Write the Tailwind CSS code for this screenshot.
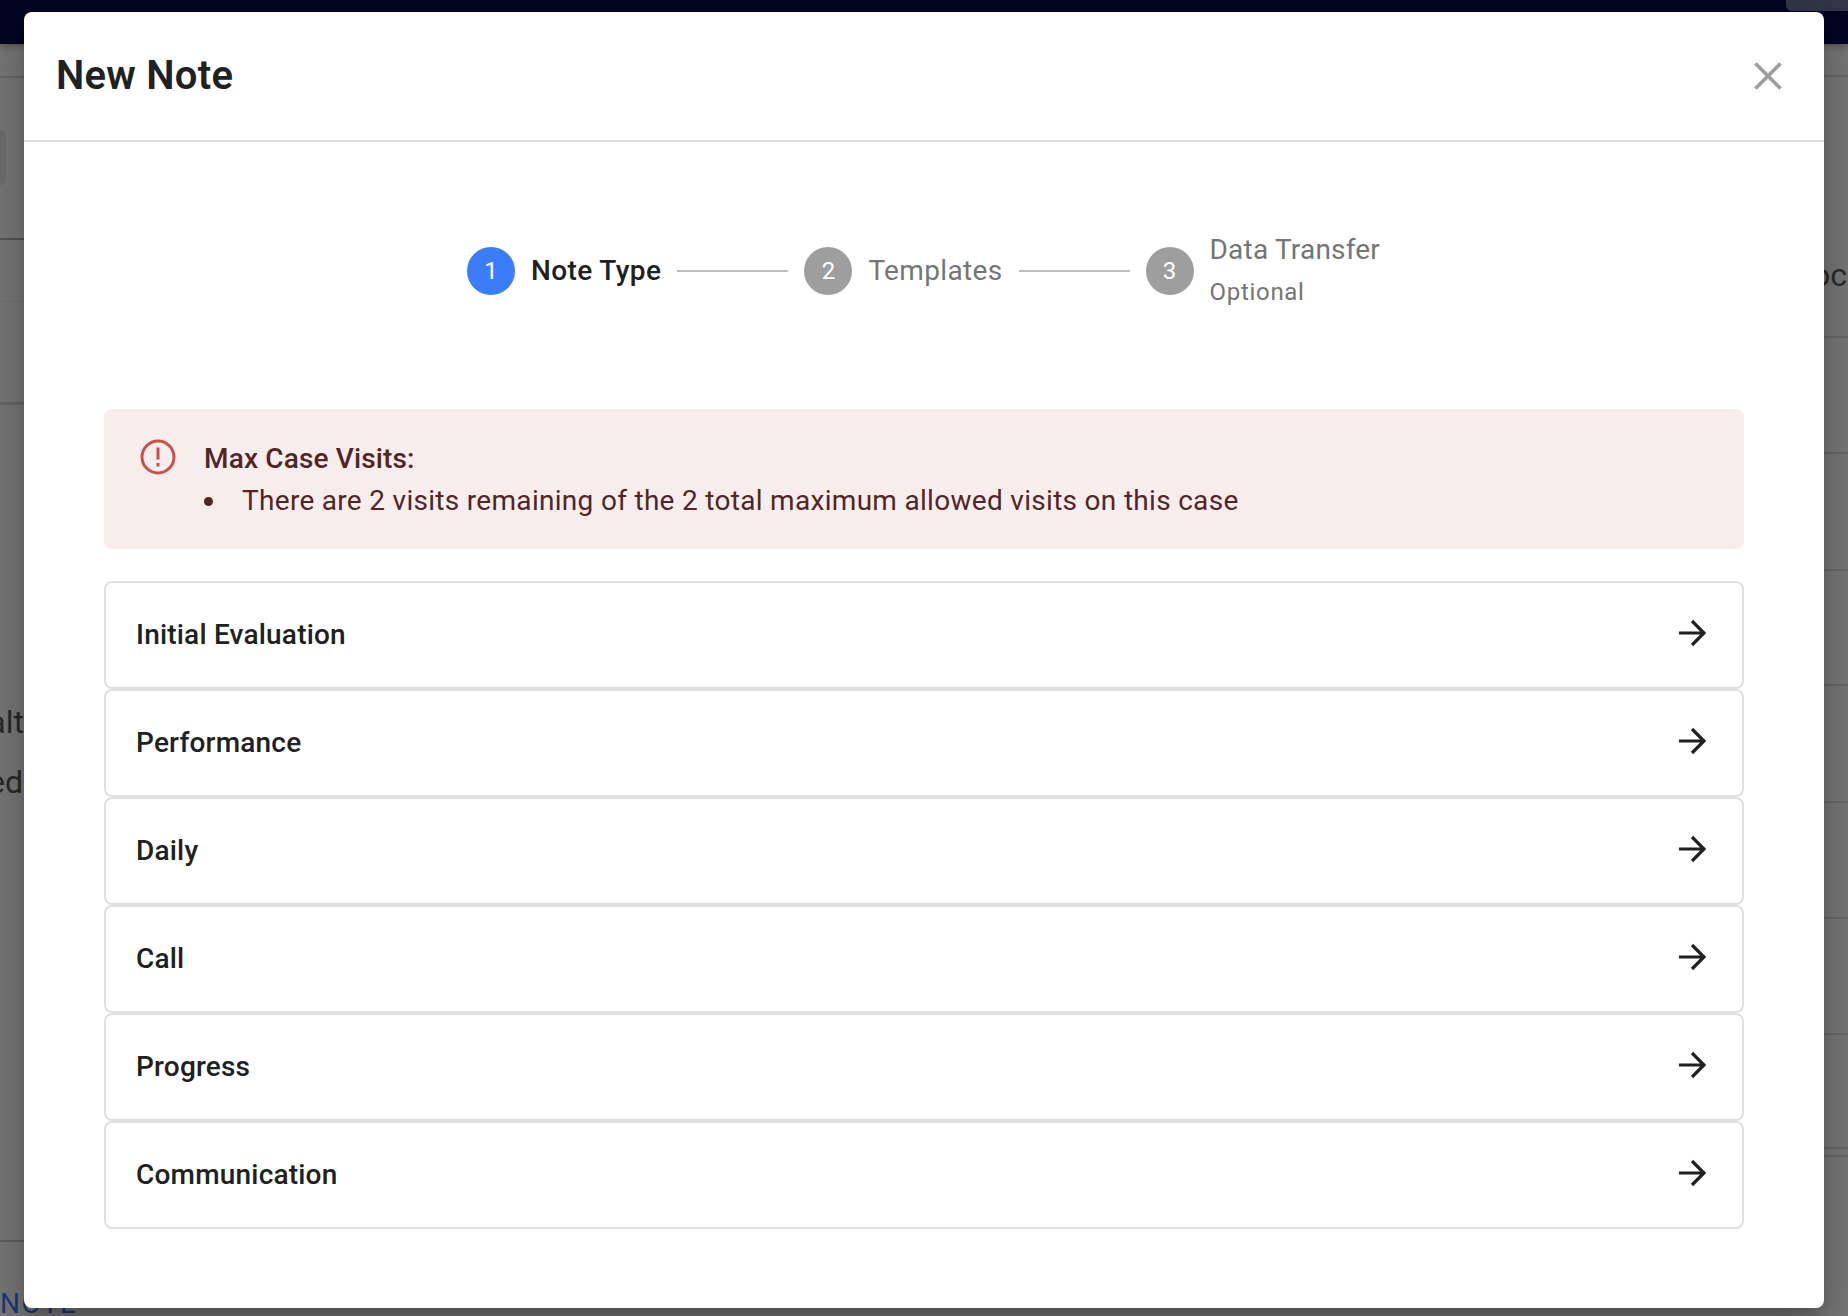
<!DOCTYPE html>
<html lang="en">
<head>
    <meta charset="UTF-8">
    <title>New Note</title>
    <script src="https://cdn.jsdelivr.net/npm/@tailwindcss/browser@4"></script>
</head>
<body class="relative flex h-[1316px] w-[1848px] flex-col overflow-hidden bg-[#787878] font-['Roboto',sans-serif]">

<!-- page behind the dialog -->
<div class="relative z-10 flex h-[44px] shrink-0 justify-end bg-[#030522] shadow-[0_2px_8px_rgba(0,0,0,0.35)]">
    <div class="h-[11px] w-[62px] rounded-bl-[6px] bg-[#33354a]"></div>
</div>
<div class="flex flex-1 justify-between text-[32px] leading-[46px] text-[#2a2a2a]">
    <div class="flex w-[24px] flex-col overflow-hidden">
        <div class="h-[34px] shrink-0 border-b-2 border-[#686868]"></div>
        <div class="h-[162px] shrink-0 border-b-2 border-[#555555] pt-[52px]"><div class="h-[55px] w-[6px] rounded-r-[8px] bg-[#6e6e6e]"></div></div>
        <div class="h-[62px] shrink-0 border-b border-[#727272]"></div>
        <div class="h-[103px] shrink-0 border-b-[3px] border-[#686868]"></div>
        <div class="mt-[294px] flex h-[46px] shrink-0 justify-end">alt</div>
        <div class="mt-[14px] flex h-[46px] shrink-0 justify-end pr-[1px]">ed</div>
        <div class="h-[437px] shrink-0 border-b-2 border-[#606060]"></div>
    </div>
    <div class="flex w-[24px] flex-col overflow-hidden">
        <div class="h-[33px] shrink-0 border-b-2 border-[#686868]"></div>
        <div class="flex h-[261px] shrink-0 justify-end border-b-2 border-[#686868] pr-[1px] pt-[175px]">oc</div>
        <div class="h-[116px] shrink-0 border-b-2 border-[#686868]"></div>
        <div class="h-[117px] shrink-0 border-b-2 border-[#686868]"></div>
        <div class="h-[115px] shrink-0 border-b-2 border-[#686868]"></div>
        <div class="h-[117px] shrink-0 border-b-2 border-[#686868]"></div>
        <div class="h-[116px] shrink-0 border-b-2 border-[#686868]"></div>
        <div class="h-[116px] shrink-0 border-b-2 border-[#686868]"></div>
        <div class="h-[114px] shrink-0 border-b-2 border-[#686868]"></div>
        <div class="h-[8px] shrink-0 border-b-2 border-[#686868]"></div>
    </div>
</div>
<div class="absolute left-0 top-[1286px] text-[28px] leading-[36px] tracking-[1.5px] text-[#1c3a78]">NOTE</div>

<!-- dialog -->
<div class="absolute left-[24px] top-[12px] z-20 flex h-[1296px] w-[1800px] flex-col rounded-[8px] bg-white shadow-[0_11px_15px_-7px_rgba(0,0,0,0.2),0_24px_38px_3px_rgba(0,0,0,0.14),0_9px_46px_8px_rgba(0,0,0,0.12)]">
    <div class="flex h-[130px] shrink-0 items-center justify-between border-b-2 border-[#e0e0e0] pl-[32px] pr-[42px]">
        <h1 class="text-[40px] font-semibold tracking-[0.25px] text-[#212121]">New Note</h1>
        <svg class="h-[28px] w-[28px]" viewBox="0 0 28 28" fill="none" stroke="#9e9e9e" stroke-width="3.6"><path d="M1.500 1.500 L26.500 26.500 M26.500 1.500 L1.500 26.500"/></svg>
    </div>

    <div class="flex flex-col px-[80px]">
        <!-- stepper -->
        <div class="flex h-[267px] items-center justify-center pb-[9px] pr-[1px] text-[28px]">
            <div class="flex h-[48px] w-[48px] items-center justify-center rounded-full bg-[#3b7cf8] text-[24px] text-white">1</div>
            <span class="ml-[16px] font-medium tracking-[0.4px] text-[#212121]">Note Type</span>
            <div class="mx-[16px] h-[2px] w-[111px] bg-[#bdbdbd]"></div>
            <div class="flex h-[48px] w-[48px] items-center justify-center rounded-full bg-[#9e9e9e] text-[24px] text-white">2</div>
            <span class="ml-[16px] tracking-[0.35px] text-[#757575]">Templates</span>
            <div class="mx-[16px] h-[2px] w-[111px] bg-[#bdbdbd]"></div>
            <div class="flex h-[48px] w-[48px] items-center justify-center rounded-full bg-[#9e9e9e] text-[24px] text-white">3</div>
            <div class="ml-[16px] flex flex-col text-[#757575]">
                <span class="leading-[42px] tracking-[0.2px]">Data Transfer</span>
                <span class="text-[24px] leading-[42px] tracking-[0.7px]">Optional</span>
            </div>
        </div>

        <!-- alert -->
        <div class="flex h-[140px] rounded-[8px] bg-[#f7eded] pl-[36px] pt-[30px] text-[28px] text-[#532525]">
            <svg class="h-[36px] w-[36px] shrink-0" viewBox="0 0 36 36" fill="none" stroke="#cb4f47" stroke-width="3"><circle cx="18" cy="18" r="16"/><path d="M18 8.500 V20.500 M18 24 V27.500"/></svg>
            <div class="ml-[28px] -mt-[1px]">
                <div class="font-medium leading-[42px] tracking-[0.15px]">Max Case Visits:</div>
                <ul class="leading-[42px] tracking-[0.3px]">
                    <li class="flex items-center"><span class="mr-[29px] h-[9px] w-[9px] rounded-full bg-[#532525]"></span>There are 2 visits remaining of the 2 total maximum allowed visits on this case</li>
                </ul>
            </div>
        </div>

        <!-- note types -->
        <div class="mt-[32px] flex flex-col text-[28px] font-medium tracking-[0.2px] text-[#212121]">
            <button class="flex h-[108px] items-center justify-between rounded-[8px] border-2 border-[#e0e0e0] pl-[30px] pr-[36px]">Initial Evaluation
                <svg class="mb-[4px] h-[28px] w-[28px]" viewBox="0 0 28 28" fill="none" stroke="#212121" stroke-width="3.2"><path d="M1 14 H26 M14 2 L26 14 L14 26"/></svg></button>
            <button class="flex h-[108px] items-center justify-between rounded-[8px] border-2 border-[#e0e0e0] pl-[30px] pr-[36px]">Performance
                <svg class="mb-[4px] h-[28px] w-[28px]" viewBox="0 0 28 28" fill="none" stroke="#212121" stroke-width="3.2"><path d="M1 14 H26 M14 2 L26 14 L14 26"/></svg></button>
            <button class="flex h-[108px] items-center justify-between rounded-[8px] border-2 border-[#e0e0e0] pl-[30px] pr-[36px]">Daily
                <svg class="mb-[4px] h-[28px] w-[28px]" viewBox="0 0 28 28" fill="none" stroke="#212121" stroke-width="3.2"><path d="M1 14 H26 M14 2 L26 14 L14 26"/></svg></button>
            <button class="flex h-[108px] items-center justify-between rounded-[8px] border-2 border-[#e0e0e0] pl-[30px] pr-[36px]">Call
                <svg class="mb-[4px] h-[28px] w-[28px]" viewBox="0 0 28 28" fill="none" stroke="#212121" stroke-width="3.2"><path d="M1 14 H26 M14 2 L26 14 L14 26"/></svg></button>
            <button class="flex h-[108px] items-center justify-between rounded-[8px] border-2 border-[#e0e0e0] pl-[30px] pr-[36px]">Progress
                <svg class="mb-[4px] h-[28px] w-[28px]" viewBox="0 0 28 28" fill="none" stroke="#212121" stroke-width="3.2"><path d="M1 14 H26 M14 2 L26 14 L14 26"/></svg></button>
            <button class="flex h-[108px] items-center justify-between rounded-[8px] border-2 border-[#e0e0e0] pl-[30px] pr-[36px]">Communication
                <svg class="mb-[4px] h-[28px] w-[28px]" viewBox="0 0 28 28" fill="none" stroke="#212121" stroke-width="3.2"><path d="M1 14 H26 M14 2 L26 14 L14 26"/></svg></button>
        </div>
    </div>
</div>

</body>
</html>
